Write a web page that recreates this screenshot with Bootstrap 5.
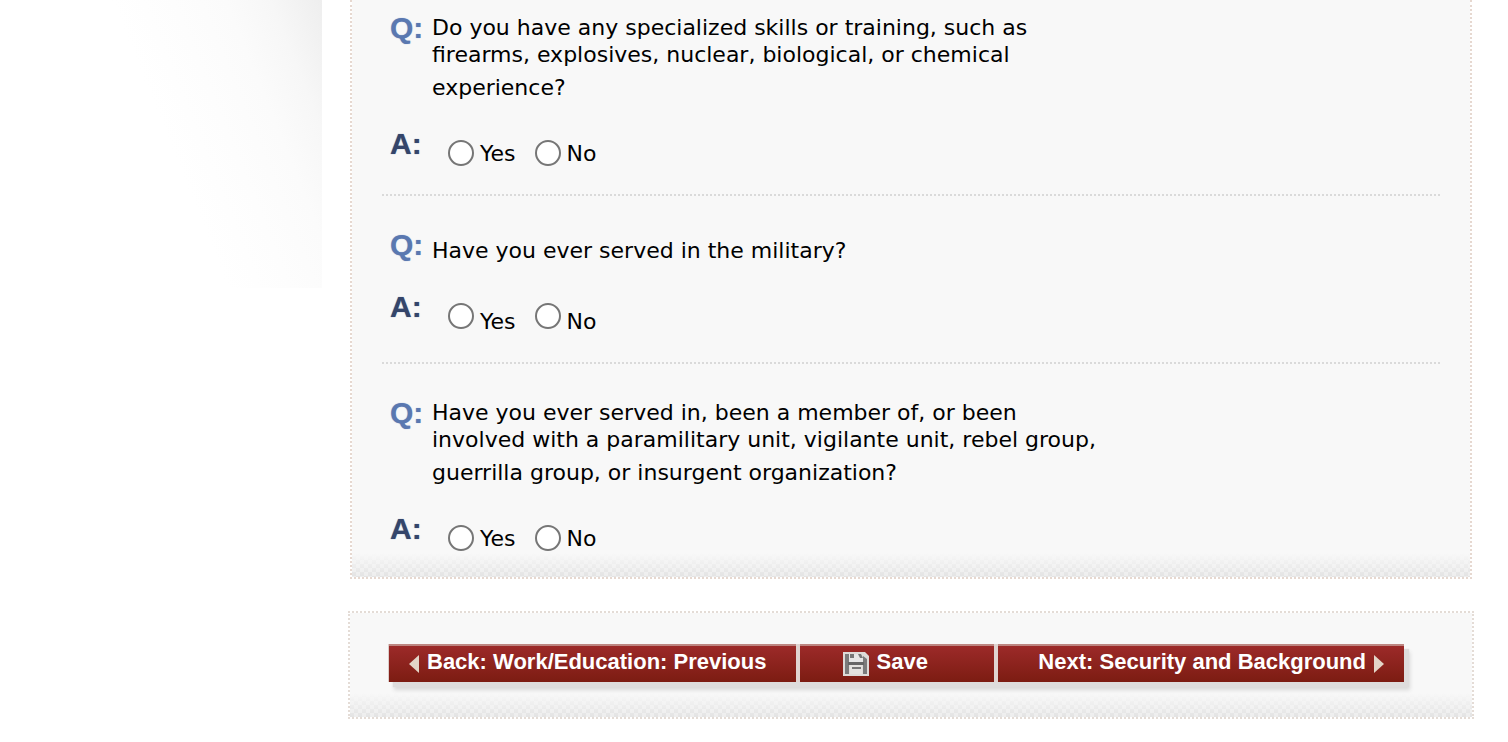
<!DOCTYPE html>
<html lang="en">
<head>
<meta charset="utf-8">
<meta name="viewport" content="width=device-width, initial-scale=1">
<title>Additional Questions</title>
<link href="https://cdn.jsdelivr.net/npm/bootstrap@5.3.0/dist/css/bootstrap.min.css" rel="stylesheet">
<style>
body{background:#fff;color:#000;font-family:"DejaVu Sans",Verdana,sans-serif;font-size:22px;line-height:27px}
.side{width:322px;height:288px;background:linear-gradient(248deg,#eee,#f7f7f7 12%,#fbfbfb 22%,#fdfdfd 34%,#fff 48%)}
.page-main{padding:0 34px 0 26px;min-width:0}
.panel{border:2px dotted #e6d8d0;background:
  linear-gradient(#f8f8f8 calc(100% - 24px),rgba(248,248,248,.2)) padding-box,
  repeating-conic-gradient(#dedede 0 25%,#ebebeb 0 50%) 0 0/8px 8px padding-box}
.questions{margin:0 2px;border-top:0;padding:0 30px}
.entry{padding:34px 8px 27px;border-bottom:2px dotted #dadada}
.entry:first-child{padding-top:13px}
.entry:last-child{border-bottom:0;padding-bottom:25px}
.tag{width:42px;font:700 30px/30px "Liberation Sans",Arial,sans-serif;color:#5a78b0;text-shadow:0 0 1px #8ea4cf}
.tag-a{color:#34456a;text-shadow:0 0 1px #7583a4}
.ask{padding-top:1px}
.ask-single{padding-top:7px}
.ask .tail{display:block;margin-top:6px}
.reply{margin-top:28px}
.choices{padding:11px 0 0 16px;gap:19px}
.choices label{display:flex;gap:6px;height:27px}
.choices.low span{padding-top:5px}
.choices.low label{height:32px}
.choices input{appearance:none;width:26px;height:26px;margin:0;border:2px solid #767676;border-radius:50%;background:#fff}
.choices input:checked{background:radial-gradient(#176bd1 55%,#fff 60%)}
.actions{margin-top:32px;padding:31px 68px 35px 38px;border-color:#e4dcd6}
.bar{gap:4px;background:#e0d4d1;border-left:1px solid #dccdca;box-shadow:5px 5px 1px #dedcdc,6px 8px 4px #d8d8d8}
.cmd{height:38px;border:0;border-top:2px solid #bd8681;border-radius:0;padding:0 20px 4px;background:linear-gradient(#9c2a29,#7c1c12);color:#fff;font:700 22px/32px "Liberation Sans",Arial,sans-serif}
.cmd svg{flex:none;margin-top:4px}
.w-link{flex:1 1 0}
.w-save{flex:0 0 194px;padding-left:43px}
</style>
</head>
<body>
<div class="d-flex align-items-start">
<aside class="side flex-shrink-0"></aside>
<main class="page-main flex-grow-1">
<form>
<div class="panel questions">
  <section class="entry">
    <div class="d-flex"><div class="tag">Q:</div><div class="ask" id="q1">Do you have any specialized skills or training, such as<br>firearms, explosives, nuclear, biological, or chemical<span class="tail">experience?</span></div></div>
    <div class="d-flex reply"><div class="tag tag-a">A:</div><div class="choices d-flex" role="radiogroup" aria-labelledby="q1"><label><input type="radio" name="skills"><span>Yes</span></label><label><input type="radio" name="skills"><span>No</span></label></div></div>
  </section>
  <section class="entry">
    <div class="d-flex"><div class="tag">Q:</div><div class="ask-single" id="q2">Have you ever served in the military?</div></div>
    <div class="d-flex reply"><div class="tag tag-a">A:</div><div class="choices low d-flex" role="radiogroup" aria-labelledby="q2"><label><input type="radio" name="military"><span>Yes</span></label><label><input type="radio" name="military"><span>No</span></label></div></div>
  </section>
  <section class="entry">
    <div class="d-flex"><div class="tag">Q:</div><div class="ask" id="q3">Have you ever served in, been a member of, or been<br>involved with a paramilitary unit, vigilante unit, rebel group,<span class="tail">guerrilla group, or insurgent organization?</span></div></div>
    <div class="d-flex reply"><div class="tag tag-a">A:</div><div class="choices d-flex" role="radiogroup" aria-labelledby="q3"><label><input type="radio" name="paramilitary"><span>Yes</span></label><label><input type="radio" name="paramilitary"><span>No</span></label></div></div>
  </section>
</div>
<div class="panel actions">
  <div class="bar d-flex">
    <button type="button" class="cmd w-link d-flex align-items-center"><svg class="me-2" width="10" height="20" viewBox="0 0 10 20"><path d="M10 1v18L0 10z" fill="#e3d5c8"/></svg>Back: Work/Education: Previous</button>
    <button type="button" class="cmd w-save d-flex align-items-center"><svg class="me-2" width="26" height="24" viewBox="0 0 26 24"><path d="M0 0h22l4 4v20H0z" fill="#dedbd8"/><path d="M2 2h4v8h14V4l4 3v15h-4v-9H6v9H2z" fill="#7b7b7b"/><path d="M6 2h11l3 3v5H6z" fill="#e6e6e6"/><path d="M7 2h4v4H7zM15 2h3l2 4h-3z" fill="#777"/><path d="M5 10h16v3H5z" fill="#666"/><path d="M7 13h12v9H7z" fill="#e4e2df"/><path d="M9 15h9v2H9z" fill="#777"/></svg>Save</button>
    <button type="button" class="cmd w-link d-flex align-items-center justify-content-end">Next: Security and Background<svg class="ms-2" width="10" height="20" viewBox="0 0 10 20"><path d="M0 1v18l10-9z" fill="#e3d5c8"/></svg></button>
  </div>
</div>
</form>
</main>
</div>
<script src="https://cdn.jsdelivr.net/npm/bootstrap@5.3.0/dist/js/bootstrap.bundle.min.js"></script>
</body>
</html>
